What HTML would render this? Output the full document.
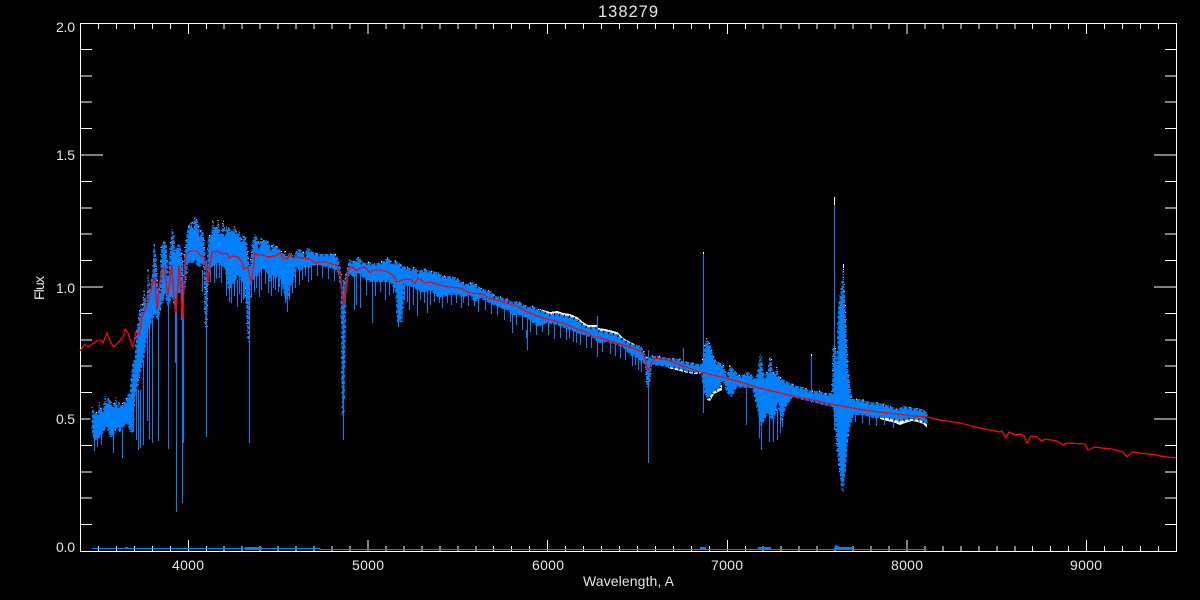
<!DOCTYPE html>
<html>
<head>
<meta charset="utf-8">
<title>138279</title>
<style>
html,body{margin:0;padding:0;background:#000;}
body{width:1200px;height:600px;overflow:hidden;}
svg{display:block;}
text{font-family:"Liberation Sans",sans-serif;fill:#e6e6e6;font-size:14px;}
</style>
</head>
<body>
<svg width="1200" height="600" viewBox="0 0 1200 600" xmlns="http://www.w3.org/2000/svg">
<rect width="1200" height="600" fill="#000"/>

<!-- axes -->
<g stroke="#fff" stroke-width="1" fill="none" shape-rendering="crispEdges">
<rect x="80.5" y="23.5" width="1096" height="528"/>
<path d="M98.5 551v-5M116.4 551v-5M134.4 551v-5M152.4 551v-5M170.3 551v-5M188.3 551v-11M206.3 551v-5M224.2 551v-5M242.2 551v-5M260.2 551v-5M278.1 551v-5M296.1 551v-5M314.1 551v-5M332 551v-5M350 551v-5M368 551v-11M386 551v-5M403.9 551v-5M421.9 551v-5M439.8 551v-5M457.8 551v-5M475.8 551v-5M493.7 551v-5M511.7 551v-5M529.7 551v-5M547.6 551v-11M565.6 551v-5M583.6 551v-5M601.5 551v-5M619.5 551v-5M637.5 551v-5M655.4 551v-5M673.4 551v-5M691.4 551v-5M709.3 551v-5M727.3 551v-11M745.3 551v-5M763.2 551v-5M781.2 551v-5M799.2 551v-5M817.1 551v-5M835.1 551v-5M853.1 551v-5M871 551v-5M889 551v-5M907 551v-11M924.9 551v-5M942.9 551v-5M960.9 551v-5M978.8 551v-5M996.8 551v-5M1014.8 551v-5M1032.7 551v-5M1050.7 551v-5M1068.7 551v-5M1086.6 551v-11M1104.6 551v-5M1122.6 551v-5M1140.5 551v-5M1158.5 551v-5"/>
<path d="M98.5 23v6M116.4 23v6M134.4 23v6M152.4 23v6M170.3 23v6M188.3 23v11M206.3 23v6M224.2 23v6M242.2 23v6M260.2 23v6M278.1 23v6M296.1 23v6M314.1 23v6M332 23v6M350 23v6M368 23v11M386 23v6M403.9 23v6M421.9 23v6M439.8 23v6M457.8 23v6M475.8 23v6M493.7 23v6M511.7 23v6M529.7 23v6M547.6 23v11M565.6 23v6M583.6 23v6M601.5 23v6M619.5 23v6M637.5 23v6M655.4 23v6M673.4 23v6M691.4 23v6M709.3 23v6M727.3 23v11M745.3 23v6M763.2 23v6M781.2 23v6M799.2 23v6M817.1 23v6M835.1 23v6M853.1 23v6M871 23v6M889 23v6M907 23v11M924.9 23v6M942.9 23v6M960.9 23v6M978.8 23v6M996.8 23v6M1014.8 23v6M1032.7 23v6M1050.7 23v6M1068.7 23v6M1086.6 23v11M1104.6 23v6M1122.6 23v6M1140.5 23v6M1158.5 23v6"/>
<path d="M80 524.6h12M80 498.2h12M80 471.8h12M80 445.4h12M80 419h23M80 392.6h12M80 366.2h12M80 339.8h12M80 313.4h12M80 287h23M80 260.6h12M80 234.2h12M80 207.8h12M80 181.4h12M80 155h23M80 128.6h12M80 102.2h12M80 75.8h12M80 49.4h12"/>
<path d="M1176 524.6h-11M1176 498.2h-11M1176 471.8h-11M1176 445.4h-11M1176 419h-22M1176 392.6h-11M1176 366.2h-11M1176 339.8h-11M1176 313.4h-11M1176 287h-22M1176 260.6h-11M1176 234.2h-11M1176 207.8h-11M1176 181.4h-11M1176 155h-22M1176 128.6h-11M1176 102.2h-11M1176 75.8h-11M1176 49.4h-11"/>
</g>

<!-- labels -->
<text x="598" y="17" style="font-size:16.5px" textLength="60" lengthAdjust="spacing">138279</text>
<text x="56" y="32" textLength="19" lengthAdjust="spacing">2.0</text>
<text x="56" y="160" textLength="19" lengthAdjust="spacing">1.5</text>
<text x="56" y="293" textLength="19" lengthAdjust="spacing">1.0</text>
<text x="56" y="424" textLength="19" lengthAdjust="spacing">0.5</text>
<text x="56" y="552" textLength="19" lengthAdjust="spacing">0.0</text>
<text x="172" y="570" textLength="32" lengthAdjust="spacing">4000</text>
<text x="352" y="570" textLength="32" lengthAdjust="spacing">5000</text>
<text x="532" y="570" textLength="32" lengthAdjust="spacing">6000</text>
<text x="711" y="570" textLength="32" lengthAdjust="spacing">7000</text>
<text x="891" y="570" textLength="32" lengthAdjust="spacing">8000</text>
<text x="1070" y="570" textLength="32" lengthAdjust="spacing">9000</text>
<text x="583" y="586" textLength="91" lengthAdjust="spacing">Wavelength, A</text>
<text transform="translate(44 300) rotate(-90)" x="0" y="0" textLength="24" lengthAdjust="spacing">Flux</text>

<!-- white under-trace -->
<g shape-rendering="crispEdges">
<polygon fill="#fff" points="540,309 550,312 557,311 563,313 570,314 577,317 583,322 588,325 597,325 598,328 605,329 617,332 623,338 630,342 637,345 642,349 642,356 630,350 617,340 605,335 590,332 570,322 550,318 540,314"/>
<polygon fill="#fff" points="668,365 680,365 690,367 702,368 702,373 695,374 688,373 680,371 668,368"/>
<polygon fill="#fff" points="706,395 714,390 722,385 722,390 714,394 710,401 707,400"/>
<polygon fill="#fff" points="880,412 927,415 927,428 923,424 918,422 912,421 905,423 900,425 893,422 887,421 880,419"/>
<path stroke="#fff" fill="none" d="M834.5 197V210M811.5 354V360M843.5 264V272M703.5 252V256"/>
<use href="#b" transform="translate(0,-1)" style="stroke:#fff;stroke-width:1;stroke-dasharray:1 6"/>
</g>

<!-- blue observed spectrum -->
<g shape-rendering="crispEdges">
<polygon id="b" fill="#0080ff" points="92,408 94,412 96,413 98,415 99,403 101,410 103,410 104,407 105,394 107,405 108,400 110,399 112,407 113,407 115,402 116,398 118,408 119,404 122,407 123,403 125,403 127,398 128,395 130,393 131,382 133,362 135,360 137,323 138,327 139,315 141,305 142,312 144,292 147,303 148,268 150,290 152,277 153,268 154,243 156,257 158,287 160,293 161,248 163,243 166,243 167,252 168,277 170,252 172,230 174,235 175,253 177,248 178,245 180,247 182,255 183,290 184,257 186,242 187,233 189,225 192,223 193,225 195,217 198,223 200,233 202,230 204,238 205,253 207,277 208,238 211,235 213,223 215,228 217,228 218,220 220,235 222,233 223,220 225,232 227,228 229,228 232,233 235,227 237,235 239,232 242,242 243,237 245,235 247,245 249,263 250,267 252,247 253,240 255,235 257,238 259,245 262,238 263,242 266,240 268,243 271,248 273,245 276,247 278,248 281,252 283,255 285,252 287,258 290,252 292,255 294,258 296,252 300,250 302,252 305,255 307,249 310,250 312,253 315,253 318,255 323,255 327,255 332,255 333,253 337,257 339,262 341,273 343,293 345,277 347,272 349,260 352,262 355,262 357,259 360,258 362,263 365,264 370,263 373,265 378,264 383,262 389,258 392,265 395,262 398,263 402,267 407,268 412,270 415,268 418,272 425,270 430,272 437,273 443,277 448,277 455,278 462,283 467,285 473,283 478,287 483,290 490,292 495,297 500,298 507,300 512,303 518,302 523,305 528,308 533,307 538,310 543,312 550,315 557,314 563,316 570,317 577,320 583,325 588,328 597,328 598,331 605,332 617,335 623,340 630,344 637,346 642,348 645,355 648,360 652,357 658,357 668,359 680,360 683,363 688,363 693,364 698,365 702,365 705,345 707,339 709,343 711,348 713,356 715,360 717,363 723,365 727,377 730,367 735,372 740,377 748,373 755,380 758,372 760,355 761,357 763,372 765,376 768,372 770,357 771,358 773,374 776,372 777,367 778,376 782,380 788,383 797,387 803,388 811,392 820,392 827,395 832,393 833,347 836,350 837,365 838,310 840,297 842,285 843,267 845,300 846,323 848,367 850,387 852,400 860,400 870,403 880,404 890,407 897,410 904,407 913,409 922,410 927,413 927,424 920,420 910,419 900,421 887,418 873,418 863,415 854,415 851,423 848,438 846,467 843,492 842,492 839,468 837,450 835,422 833,407 823,405 813,402 803,400 793,397 786,407 782,422 778,407 773,423 768,413 763,423 760,425 757,407 752,388 747,388 737,387 732,397 727,393 723,380 720,388 713,392 708,400 704,393 701,372 695,373 688,372 680,369 668,367 660,366 652,365 649,388 647,388 645,365 642,362 637,358 630,355 623,348 617,345 607,342 598,343 593,338 583,335 577,333 570,330 557,325 547,323 538,327 533,323 527,318 520,315 512,315 507,310 500,308 493,305 487,302 480,298 475,303 470,295 463,297 457,295 450,295 443,297 437,297 430,290 423,293 417,290 412,287 405,285 402,322 397,322 396,293 393,287 390,282 383,282 377,282 370,282 363,278 358,273 354,278 351,275 348,277 346,292 344,416 342,416 341,290 338,273 335,270 330,268 325,267 320,265 315,265 310,268 307,267 303,267 300,273 297,267 293,283 290,287 287,303 283,290 280,278 277,278 273,277 270,283 267,273 263,268 260,273 257,277 253,280 250,287 249,342 248,342 245,283 242,283 238,275 235,283 232,285 229,292 227,283 225,268 222,267 218,263 215,265 212,267 208,277 207,328 205,328 204,270 203,263 200,267 198,267 195,262 192,263 188,263 185,290 182,293 178,293 175,310 172,297 168,307 165,297 162,303 158,323 155,313 152,322 148,330 145,353 140,375 135,400 133,433 130,432 127,423 123,427 120,433 117,428 113,437 110,437 107,427 103,433 100,437 97,440 94,440 92,433"/>
<!-- jagged edge texture -->
<use href="#b" style="stroke:#000;stroke-width:3;stroke-dasharray:1 4"/>
<path fill="none" stroke="#0080ff" stroke-width="1" d="M94.5 430V451M97.5 430V447M101.5 430V445M113.5 430V453M122.5 430V458M133.5 390V432M136.5 390V440M138.5 390V450M140.5 390V448M143.5 360V445M147.5 320V421M149.5 320V439M152.5 320V443M158.5 310V441M168.5 290V449M176.5 250V512M182.5 260V503M183.5 290V443M202.5 270V292M206.5 260V437M214.5 260V283M219.5 260V278M229.5 280V302M237.5 280V307M241.5 280V303M243.5 280V300M246.5 280V302M249.5 270V443M256.5 270V288M259.5 270V297M268.5 270V293M273.5 270V288M279.5 270V287M285.5 280V303M287.5 280V312M292.5 280V293M302.5 260V280M308.5 260V282M343.5 280V440M354.5 270V310M356.5 270V305M360.5 270V308M366.5 270V295M372.5 270V323M393.5 280V293M398.5 300V327M409.5 280V310M417.5 285V316M424.5 285V303M427.5 285V313M439.5 290V303M447.5 290V303M463.5 290V303M474.5 290V306M512.5 310V333M527.5 315V350M554.5 325V339M569.5 325V338M576.5 325V343M597.5 316V357M628.5 345V353M635.5 350V365M648.5 350V463M683.5 348V366M703.5 254V413M746.5 385V425M759.5 400V438M761.5 420V450M769.5 410V442M773.5 420V442M777.5 410V440M780.5 410V433M782.5 420V427M811.5 356V403M834.5 205V430"/>
<path fill="none" stroke="#0080ff" stroke-width="1" d="M210.5 260V282M216.5 260V279M221.5 260V283M226.5 270V296M231.5 280V303M234.5 280V296M239.5 270V294M244.5 280V298M251.5 280V298M254.5 270V292M261.5 265V290M265.5 265V284M271.5 270V296M275.5 270V290M278.5 270V292M281.5 270V296M289.5 280V300M295.5 270V288M299.5 265V285M305.5 260V276M311.5 260V280M317.5 260V276M322.5 260V278M328.5 260V279M334.5 265V281M375.5 275V296M380.5 275V292M385.5 275V300M389.5 275V295M404.5 280V300M407.5 285V302M413.5 285V305M420.5 285V300M430.5 285V305M434.5 290V302M442.5 290V308M451.5 290V305M456.5 290V303M461.5 290V308M468.5 290V306M478.5 295V312M485.5 295V310M491.5 300V314M497.5 300V315M504.5 305V320M510.5 310V322M516.5 310V325M522.5 312V330M530.5 318V332M536.5 322V335M542.5 320V332M548.5 322V335M560.5 325V338M566.5 328V340M573.5 330V342M580.5 332V345M586.5 335V348M591.5 335V348M602.5 340V352M610.5 342V354M615.5 344V356M620.5 346V358M625.5 350V360M632.5 354V366M638.5 358V370M641.5 360V372M855.5 405V422M862.5 405V423M869.5 405V425M876.5 408V426M884.5 408V425M893.5 410V428"/>
<path fill="none" stroke="#0080ff" stroke-width="2" d="M176 300V363M182 290V320M527 330V338"/>
<path fill="none" stroke="#000" stroke-width="1" d="M135.5 395V432M139.5 380V405M142.5 380V410M146.5 360V400M150.5 335V400M153.5 330V385M160.5 320V360M173.5 318V360"/>
<path fill="none" stroke="#0080ff" stroke-width="1" d="M92 548.5H320V549.5H324V549M324 549.5H927"/>
<polygon fill="#0080ff" points="834,549 835,545 838,546 840,547 853,547 853,550 834,550"/>
<polygon fill="#0080ff" points="758,547 771,547 771,550 758,550"/>
<polygon fill="#0080ff" points="700,547 706,547 706,550 700,550"/>
<polygon fill="#0080ff" points="125,547 128,547 128,549 125,549"/>
<polygon fill="#0080ff" points="245,547 262,547 262,550 245,550"/>
</g>

<!-- red model spectrum -->
<polyline fill="none" stroke="#ff0000" stroke-width="1.3" shape-rendering="crispEdges" points="80,351 85,344 88,347 93,344 98,340 101,340 103,343 107,333 111,343 114,347 118,343 122,338 123,338 125,329 128,333 132,345 133,347 136,332 139,335 141,327 142,317 145,310 148,300 151,290 153,282 155,277 157,310 159,290 161,270 164,267 166,280 168,295 170,280 172,265 173,287 176,313 178,283 179,265 182,310 183,320 184,277 186,255 190,251 197,251 200,255 204,257 206,268 208,283 210,267 212,252 217,251 220,253 223,254 227,253 229,258 233,256 238,257 242,262 244,269 248,267 250,278 252,282 253,270 255,253 258,255 263,255 268,257 275,256 280,253 283,258 287,259 290,254 293,258 297,257 303,258 310,259 315,263 320,262 327,262 332,264 337,265 340,273 342,290 344,305 347,285 348,270 352,267 357,271 360,268 365,267 370,273 373,270 380,270 388,272 393,275 397,282 402,280 410,279 415,283 418,278 425,283 430,282 440,285 448,287 460,288 470,293 483,294 488,298 500,301 517,306 527,312 543,318 563,323 577,329 588,333 593,337 598,337 613,342 630,347 642,352 645,358 647,368 649,370 652,362 655,358 668,360 680,365 697,371 713,375 730,379 747,384 763,389 780,393 797,397 813,400 830,404 847,407 863,410 880,412 897,414 913,416 927,417 940,420 960,423 980,428 995,431 1000,432 1002,431 1006,438 1009,432 1015,435 1021,434 1024,436 1027,443 1031,436 1037,437 1042,441 1045,439 1057,441 1063,445 1067,443 1085,444 1088,450 1095,447 1102,448 1112,449 1123,452 1127,457 1132,452 1140,453 1157,455 1160,456 1167,457 1176,458"/>
</svg>
</body>
</html>
